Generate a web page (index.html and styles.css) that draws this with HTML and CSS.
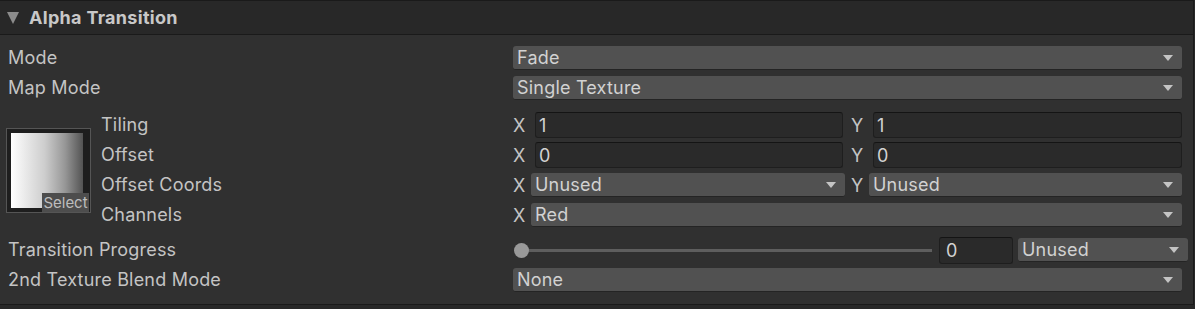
FILE: index.html
```html
<!DOCTYPE html>
<html lang="en">

<head>
    <meta charset="UTF-8">
    <meta name="viewport" content="width=device-width, initial-scale=1.0">
    <title>Alpha Transition</title>
    <link rel="stylesheet" href="styles.css">
</head>

<body>
    <div class="panel">
        <div class="header">
            <span class="fold"></span>
            <span class="title">Alpha Transition</span>
        </div>
        <div class="content">
            <div class="row">
                <div class="label">Mode</div>
                <div class="control">
                    <div class="dropdown"><span>Fade</span><i class="arrow"></i></div>
                </div>
            </div>
            <div class="row">
                <div class="label">Map Mode</div>
                <div class="control">
                    <div class="dropdown"><span>Single Texture</span><i class="arrow"></i></div>
                </div>
            </div>

            <div class="tex-block">
                <div class="thumb">
                    <div class="tex"></div>
                    <span class="select">Select</span>
                </div>
                <div class="tex-rows">
                    <div class="row">
                        <div class="label sub">Tiling</div>
                        <div class="control">
                            <span class="axis">X</span>
                            <div class="field half">1</div>
                            <span class="axis y">Y</span>
                            <div class="field">1</div>
                        </div>
                    </div>
                    <div class="row">
                        <div class="label sub">Offset</div>
                        <div class="control">
                            <span class="axis">X</span>
                            <div class="field half">0</div>
                            <span class="axis y">Y</span>
                            <div class="field">0</div>
                        </div>
                    </div>
                    <div class="row">
                        <div class="label sub">Offset Coords</div>
                        <div class="control">
                            <span class="axis small">X</span>
                            <div class="dropdown half-dd"><span>Unused</span><i class="arrow"></i></div>
                            <span class="axis small y2">Y</span>
                            <div class="dropdown"><span>Unused</span><i class="arrow"></i></div>
                        </div>
                    </div>
                    <div class="row">
                        <div class="label sub">Channels</div>
                        <div class="control">
                            <span class="axis small">X</span>
                            <div class="dropdown"><span>Red</span><i class="arrow"></i></div>
                        </div>
                    </div>
                </div>
            </div>

            <div class="row progress">
                <div class="label">Transition Progress</div>
                <div class="control">
                    <div class="slider">
                        <div class="track"></div>
                        <div class="knob"></div>
                    </div>
                    <div class="field value">0</div>
                    <div class="dropdown wide"><span>Unused</span><i class="arrow"></i></div>
                </div>
            </div>
            <div class="row">
                <div class="label">2nd Texture Blend Mode</div>
                <div class="control">
                    <div class="dropdown"><span>None</span><i class="arrow"></i></div>
                </div>
            </div>
        </div>
    </div>
</body>

</html>
```

FILE: styles.css
```css
body {
    margin: 0;
    background-color: #282828;
    font-family: "Inter", "Liberation Sans", sans-serif;
    font-size: 18px;
    letter-spacing: 0.2px;
    color: #c4c4c4;
}

.panel {
    width: 1193px;
    border-right: 1px solid #1a1a1a;
    border-bottom: 1px solid #1a1a1a;
    background-color: #303030;
}

.header {
    height: 33px;
    border-top: 1px solid #1a1a1a;
    border-bottom: 1px solid #1a1a1a;
    background-color: #282828;
    display: flex;
    align-items: center;
    padding-left: 7px;
}

.fold {
    width: 0;
    height: 0;
    border-left: 6px solid transparent;
    border-right: 6px solid transparent;
    border-top: 12px solid #8c8c8c;
    margin-right: 10px;
    margin-top: 1px;
}

.title {
    font-weight: bold;
    color: #c8c8c8;
    letter-spacing: 0.3px;
    margin-top: -1px;
}

.content {
    padding: 8px 11px 9px 8px;
}

.row {
    display: flex;
    align-items: center;
    height: 30px;
}

.label {
    width: 505px;
    flex-shrink: 0;
    white-space: nowrap;
    margin-top: -1px;
}

.label.sub {
    width: 412px;
}

.control {
    flex: 1;
    display: flex;
    align-items: center;
}

.dropdown {
    flex: 1;
    height: 24px;
    box-sizing: border-box;
    background-color: #515151;
    border-radius: 3px;
    border-bottom: 1px solid #242424;
    display: flex;
    align-items: center;
    justify-content: space-between;
    padding: 0 9px 0 4px;
    color: #d2d2d2;
}

.arrow {
    width: 0;
    height: 0;
    border-left: 5px solid transparent;
    border-right: 5px solid transparent;
    border-top: 6px solid #c4c4c4;
}

.field {
    flex: 1;
    height: 26px;
    box-sizing: border-box;
    background-color: #2a2a2a;
    border: 1px solid #1e1e1e;
    border-top-color: #141414;
    border-radius: 3px;
    padding-left: 3px;
    display: flex;
    align-items: center;
    color: #d2d2d2;
}

.field.half {
    flex: none;
    width: 308px;
}

.axis {
    width: 22px;
    flex-shrink: 0;
}

.axis.y {
    margin-left: 8px;
}

.axis.small {
    width: 18px;
}

.axis.y2 {
    margin-left: 6px;
}

.dropdown.half-dd {
    flex: none;
    width: 314px;
}

/* texture block */
.tex-block {
    display: flex;
    align-items: center;
    margin-top: 7px;
    margin-left: -2px;
}

.thumb {
    position: relative;
    width: 85px;
    height: 85px;
    box-sizing: border-box;
    border: 1px solid #555555;
    background-color: #1e1e1e;
    padding: 4px;
    margin-right: 10px;
    flex-shrink: 0;
}

.tex {
    width: 75px;
    height: 75px;
    background: linear-gradient(to right, #ffffff 0%, #eeeeee 15%, #cdcdcd 45%, #979797 72%, #535353 96%, #1e1e1e 96%);
}

.select {
    position: absolute;
    right: 1px;
    bottom: 0;
    width: 47px;
    height: 19px;
    background-color: #4d4d4d;
    color: #bdbdbd;
    font-size: 15px;
    letter-spacing: 0;
    line-height: 19px;
    text-align: center;
}

.tex-rows {
    flex: 1;
}

/* transition progress */
.progress {
    margin-top: 5px;
}

.slider {
    position: relative;
    width: 419px;
    height: 20px;
    flex-shrink: 0;
    margin-right: 7px;
}

.track {
    position: absolute;
    left: 8px;
    right: 0;
    top: 9px;
    height: 3px;
    background-color: #5e5e5e;
}

.knob {
    position: absolute;
    left: 1px;
    top: 3px;
    width: 15px;
    height: 15px;
    border-radius: 50%;
    background-color: #999999;
}

.field.value {
    flex: none;
    width: 74px;
    height: 27px;
    margin-right: 5px;
    padding-left: 6px;
}

.dropdown.wide {
    margin-right: -6px;
}
```
